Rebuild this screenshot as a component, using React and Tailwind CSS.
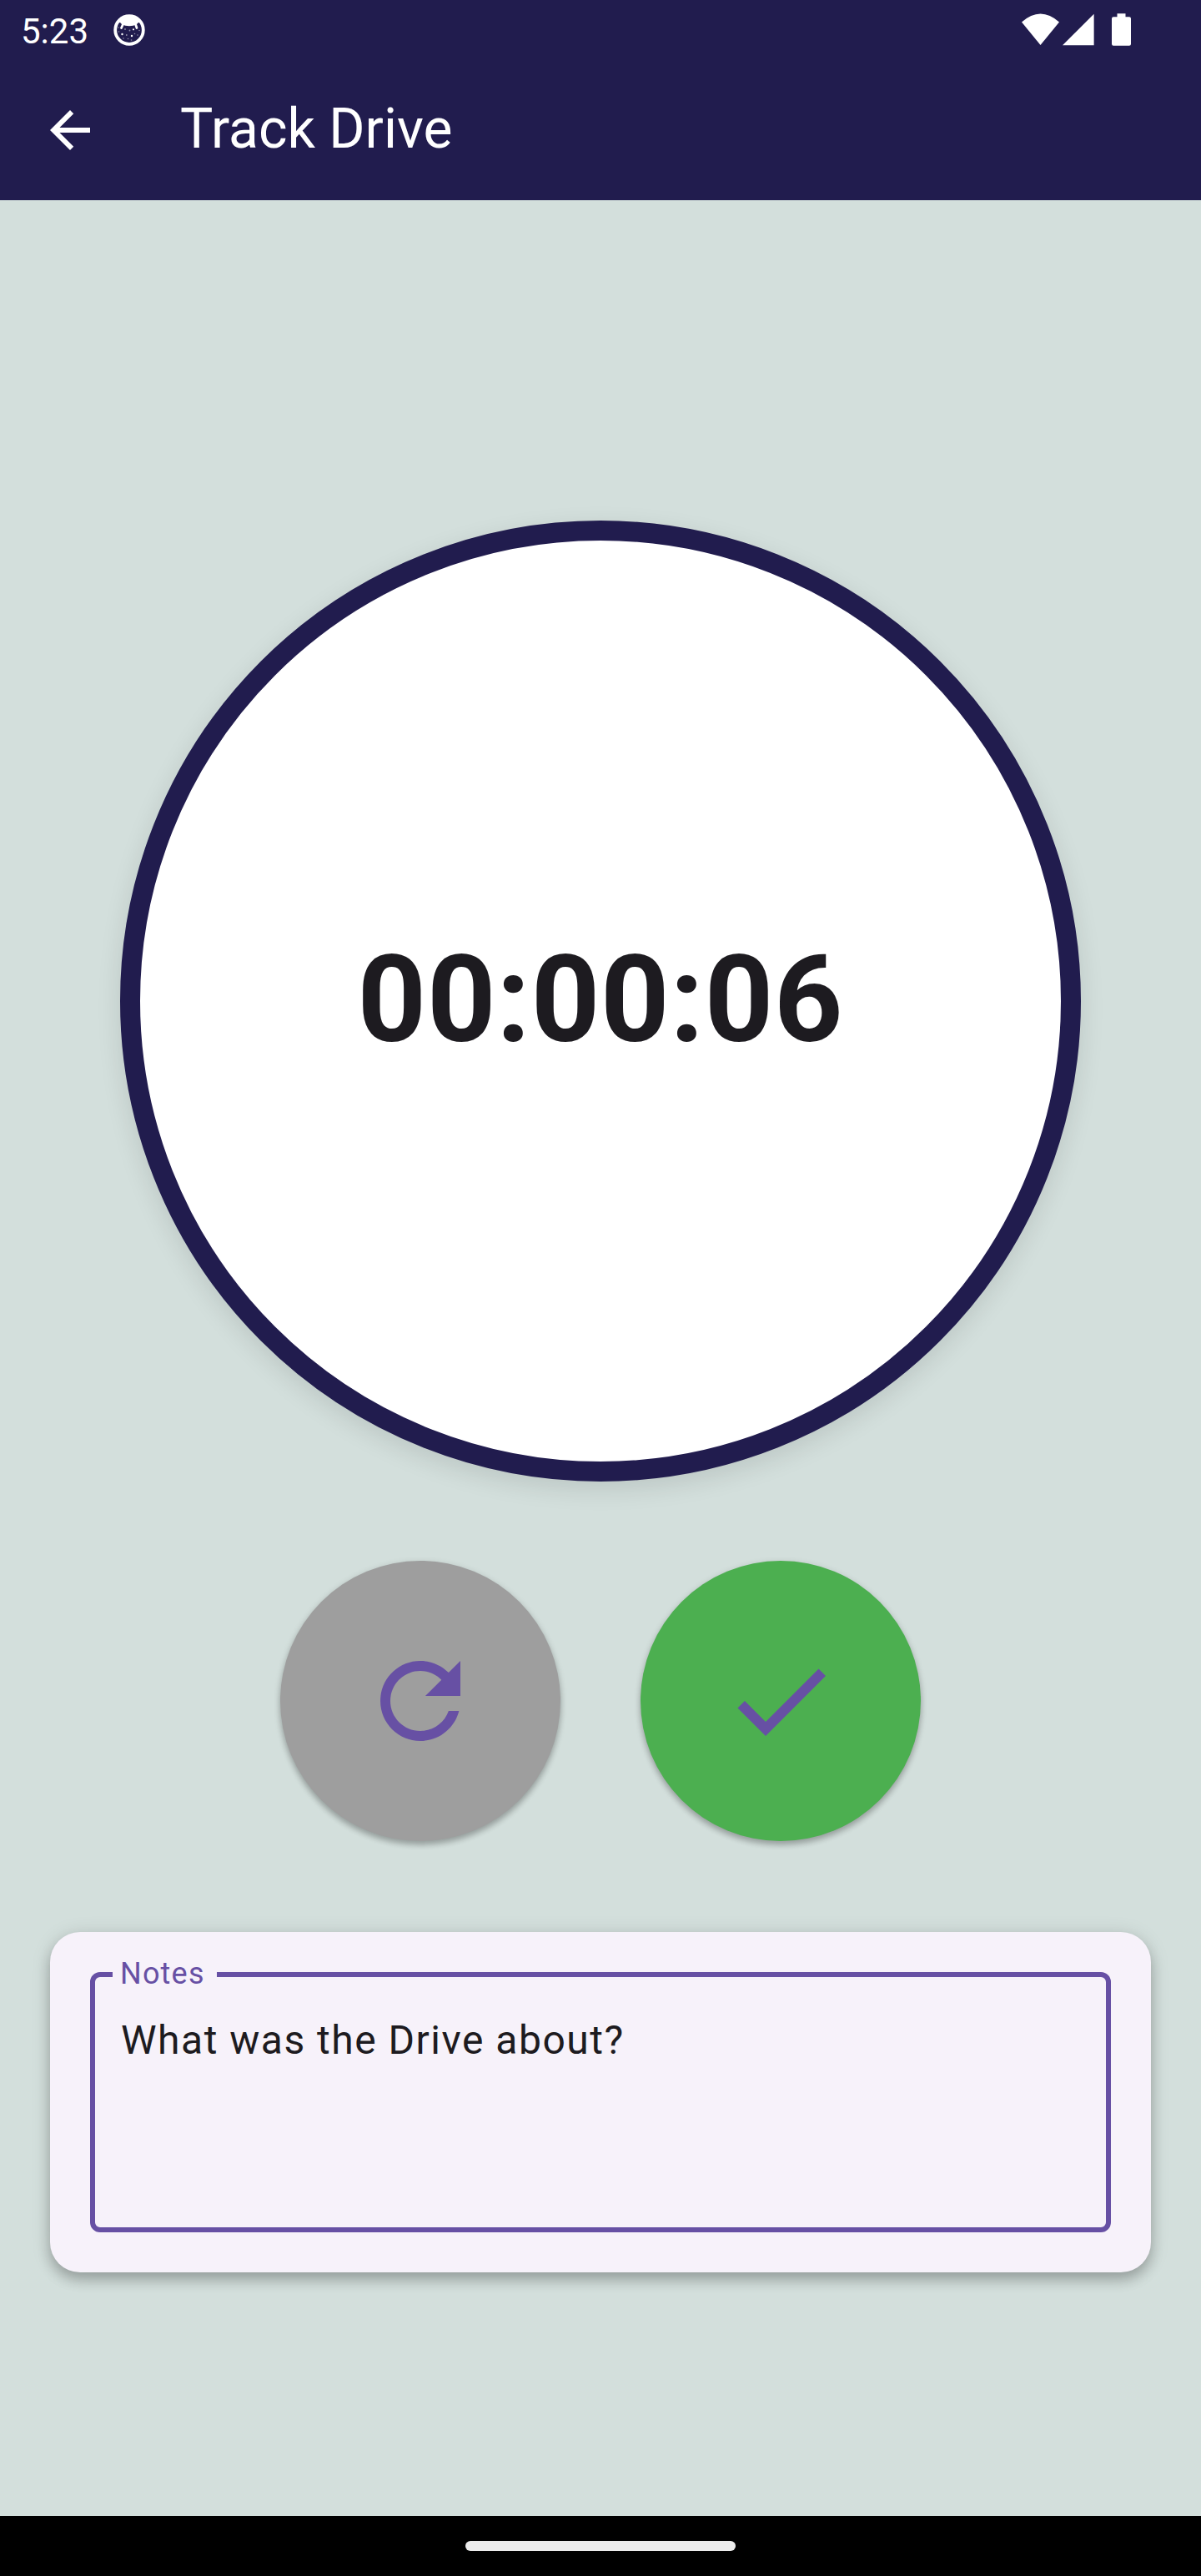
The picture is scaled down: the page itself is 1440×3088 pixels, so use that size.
function StatusBar() {
  return (
    <div className="flex h-[72px] items-center text-white">
      <span className="ml-[25px] w-[82px] pt-1 text-[42px] leading-[72px]">5:23</span>
      <svg className="ml-7 h-[40px] w-[40px]" viewBox="0 0 40 40" fill="none">
        <circle cx="20" cy="20" r="16.8" stroke="white" strokeWidth="3.8" />
        <path d="M5 11.500C8 5 13 3 20 3s12 2 15 8.500L31 11l-2.500 2.500Q25 15.300 20 15.300T11.500 13.500L9 11z" fill="white" />
        <path d="M12.500 13 10.500 17.500M27.500 13 29 17.500" stroke="white" strokeWidth="2.800" strokeLinecap="round" />
        <g fill="white">
          <circle cx="11.500" cy="25" r="1.200" />
          <circle cx="23" cy="27" r="1.200" />
          <circle cx="25" cy="19.300" r="1.100" />
          <g opacity="0.5">
            <circle cx="15" cy="19" r=".9" />
            <circle cx="20.500" cy="20.500" r=".9" />
            <circle cx="16.800" cy="26" r=".9" />
            <circle cx="13" cy="30" r=".8" />
            <circle cx="18.500" cy="30.500" r=".8" />
            <circle cx="22.500" cy="32" r=".8" />
            <circle cx="26.500" cy="24.500" r=".8" />
            <circle cx="30" cy="26" r=".8" />
            <circle cx="32" cy="20.500" r=".8" />
            <circle cx="7.500" cy="22" r=".8" />
            <circle cx="7" cy="17" r=".8" />
          </g>
        </g>
      </svg>
      <svg className="ml-auto mr-[84px] h-[72px] w-[132px]" viewBox="1224 0 132 72" fill="white">
        <path d="M1225 26.500Q1247.500 6.500 1270 26.500L1247.500 54z" />
        <path d="M1274 54.300 1311.600 16.800V54.300z" />
        <path d="M1339.500 16.200h10v4h4.500a2 2 0 0 1 2 2v30.500a2 2 0 0 1-2 2h-19a2 2 0 0 1-2-2V22.200a2 2 0 0 1 2-2h4.500z" />
      </svg>
    </div>
  );
}

function AppBar() {
  return (
    <div className="flex h-[168px] items-center text-white">
      <svg className="ml-12 size-[72px]" viewBox="0 0 24 24" fill="currentColor">
        <path d="M20 11H7.830l5.590-5.590L12 4l-8 8 8 8 1.410-1.410L7.830 13H20z" />
      </svg>
      <h1 className="ml-24 pb-[2px] text-[66px] leading-[84px]">Track Drive</h1>
    </div>
  );
}

function RoundButton({ color, label, d }) {
  return (
    <button
      aria-label={label}
      className={
        "flex size-[336px] items-center justify-center rounded-full shadow-[0_3px_9px_rgba(0,0,0,0.2),0_5px_6px_rgba(0,0,0,0.14)] " +
        color
      }
    >
      <svg className="size-36 fill-[#6750a4]" viewBox="0 0 24 24">
        <path d={d} />
      </svg>
    </button>
  );
}

export default function App() {
  return (
    <div className="flex h-[3088px] w-[1440px] flex-col overflow-hidden bg-[#d3dfdc] font-['Roboto',sans-serif]">
      <header className="h-[240px] shrink-0 bg-[#211c4e]">
        <StatusBar />
        <AppBar />
      </header>

      <main className="flex flex-1 flex-col items-center pt-96">
        <div className="flex size-[1152px] shrink-0 items-center justify-center rounded-full border-[24px] border-[#211c4e] bg-white shadow-[0_9px_30px_rgba(0,0,0,0.11)]">
          <span className="pb-[2px] text-[144px] leading-[168px] font-bold tracking-[0.75px] text-[#1d1b20]">
            00:00:06
          </span>
        </div>

        <div className="mt-[95px] flex gap-24">
          <RoundButton
            label="Restart"
            color="bg-[#9e9e9e]"
            d="M17.650 6.350C16.200 4.900 14.210 4 12 4c-4.420 0-7.990 3.580-7.990 8s3.570 8 7.990 8c3.730 0 6.840-2.550 7.730-6h-2.080c-.82 2.330-3.040 4-5.650 4-3.310 0-6-2.690-6-6s2.690-6 6-6c1.660 0 3.140.69 4.220 1.780L13 11h7V4z"
          />
          <RoundButton
            label="Finish"
            color="bg-[#4caf50]"
            d="M9 16.170 4.830 12l-1.420 1.410L9 19 21 7l-1.410-1.410z"
          />
        </div>

        <section className="mt-[108.5px] h-[408px] w-[1320px] rounded-[36px] bg-[#f7f2fa] p-12 shadow-[0_9px_15px_rgba(0,0,0,0.22),0_3px_24px_rgba(0,0,0,0.12)]">
          <fieldset className="relative h-[312px] rounded-[12px] border-[6px] border-[#6750a4] px-[31px] pt-[40px]">
            <span className="absolute -top-[28px] left-[21px] h-12 w-[125px] bg-[#f7f2fa] pl-[9px] text-[36px] leading-[48px] tracking-[1.2px] text-[#6750a4]">
              Notes
            </span>
            <p className="text-[48px] leading-[72px] tracking-[1.5px] text-[#1d1b20]">What was the Drive about?</p>
          </fieldset>
        </section>
      </main>

      <footer className="flex h-[72px] shrink-0 items-center justify-center bg-black">
        <div className="h-3 w-[324px] rounded-full bg-[#ececec]" />
      </footer>
    </div>
  );
}
